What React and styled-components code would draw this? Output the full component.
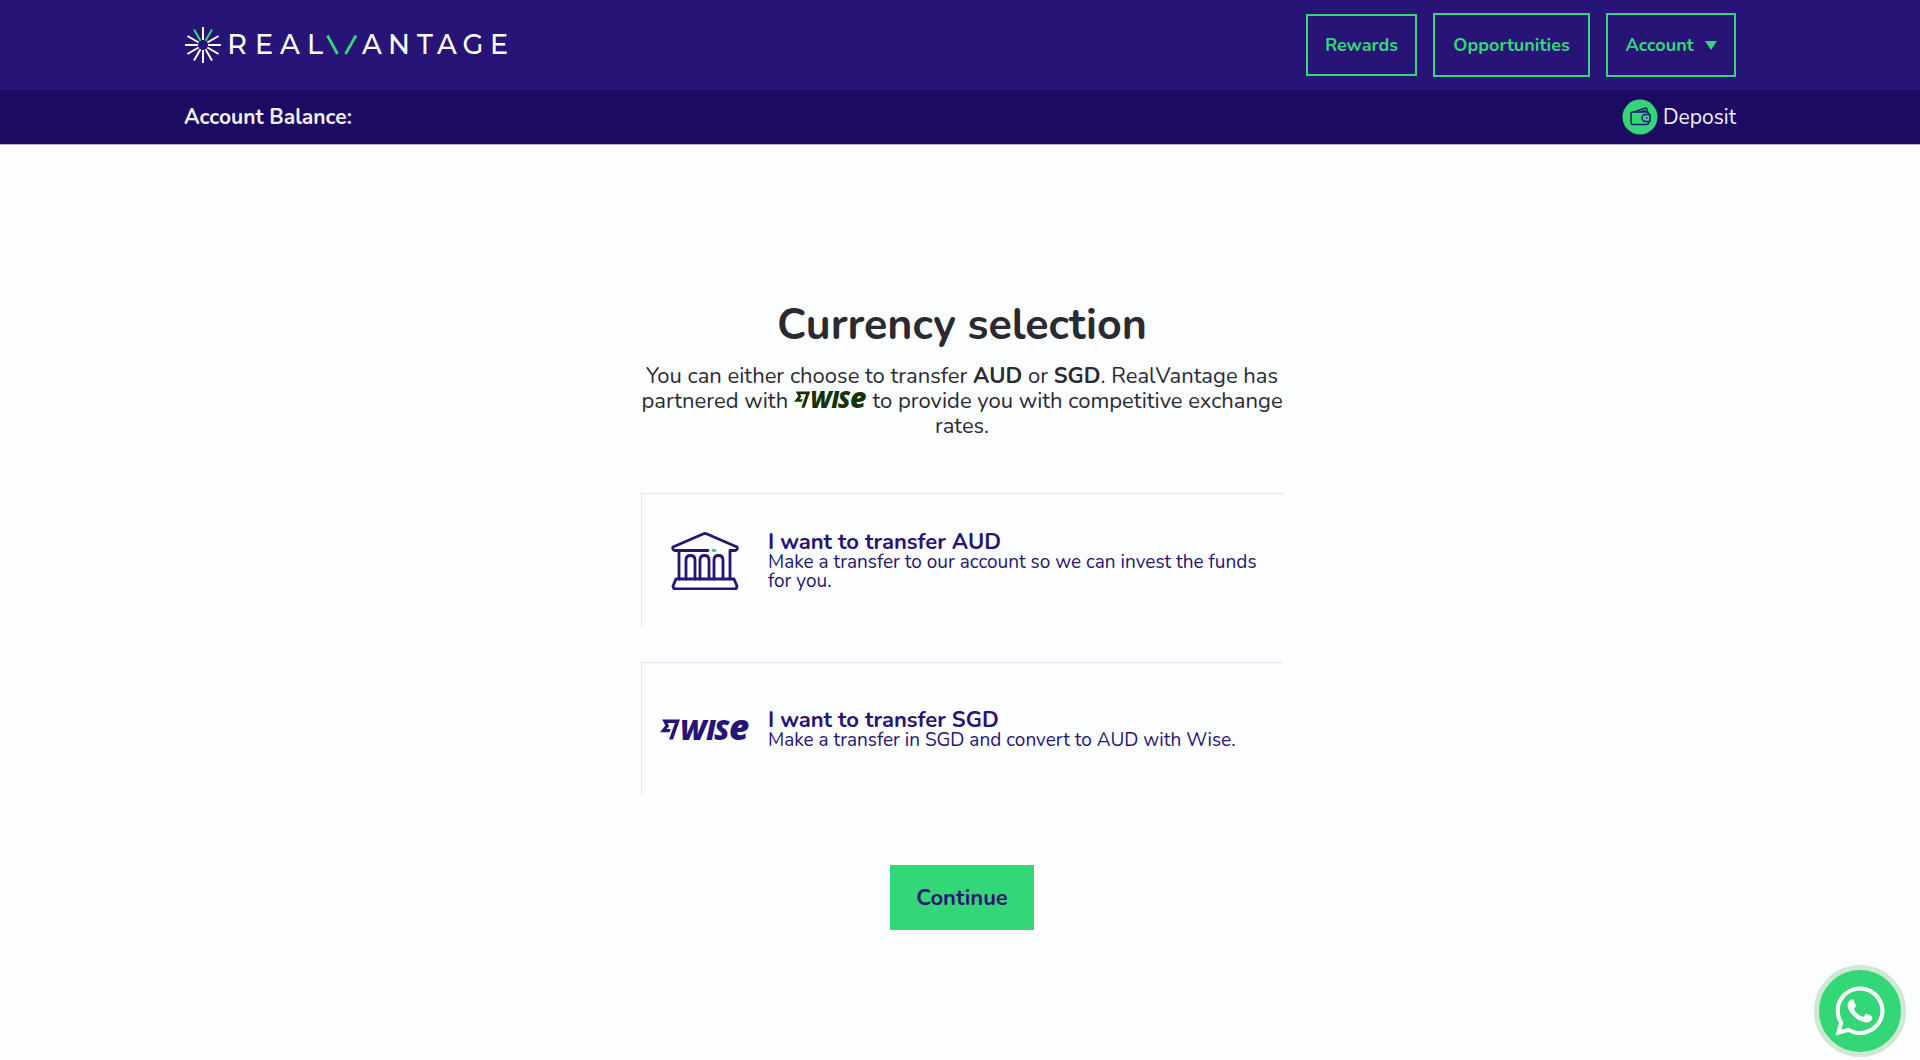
import React from 'react'
import styled, { createGlobalStyle } from 'styled-components'
import { FaWhatsapp } from 'react-icons/fa'

const GlobalStyle = createGlobalStyle`
  * {
    box-sizing: border-box;
  }

  body {
    margin: 0;
    min-height: 100vh;
    background: #fcfdff;
    color: #2b2a30;
    font-family: Nunito, Lato, sans-serif;
  }
`

const Header = styled.header`
  border-bottom: 1px solid #b5b0d0;
`

const Bar = styled.div`
  padding: 0 24px;
  background: ${({ $dark }) => ($dark ? '#1d0a62' : '#281376')};
`

const Container = styled.div`
  display: flex;
  align-items: center;
  justify-content: space-between;
  max-width: 1552px;
  height: ${({ $height }) => $height}px;
  margin: 0 auto;
`

const LogoLink = styled.a`
  display: flex;
`

const Nav = styled.nav`
  display: flex;
  align-items: center;
  gap: 16px;
`

const NavButton = styled.button`
  display: flex;
  align-items: center;
  justify-content: center;
  gap: 11px;
  width: ${({ $width }) => $width}px;
  height: ${({ $height = 64 }) => $height}px;
  padding: 0;
  border: 2px solid #33d778;
  background: none;
  color: #33d778;
  font: 700 18px Nunito, Lato, sans-serif;
  cursor: pointer;
`

const Caret = styled.span`
  border: 6px solid transparent;
  border-top: 9px solid #33d778;
  border-bottom: 0;
`

const Balance = styled.div`
  color: #f0f2ff;
  font-size: 21px;
  font-weight: 700;
`

const DepositLink = styled.a`
  display: flex;
  align-items: center;
  gap: 5px;
  color: #f0f2ff;
  font-size: 21px;
  text-decoration: none;
`

const Main = styled.main`
  display: flex;
  flex-direction: column;
  align-items: center;
  padding: 152px 24px 48px 28px;
`

const Title = styled.h1`
  margin: 0;
  font-size: 43px;
  font-weight: 700;
  line-height: 56px;
`

const Intro = styled.p`
  max-width: 644px;
  margin: 11px 0 54px;
  font-size: 22px;
  line-height: 25px;
  text-align: center;
`

const Options = styled.div`
  display: flex;
  flex-direction: column;
  gap: 35px;
  width: 100%;
  max-width: 642px;
`

const Option = styled.button`
  display: flex;
  align-items: center;
  gap: 18px;
  height: 134px;
  padding: 0 16px 0 18px;
  border: 0 solid #e3e5f5;
  border-width: 1px 0 0 1px;
  background: none;
  color: #281376;
  font-family: inherit;
  text-align: left;
  cursor: pointer;
`

const OptionIcon = styled.span`
  display: flex;
  flex: none;
  justify-content: center;
  width: 90px;
`

const OptionTitle = styled.strong`
  display: block;
  font-size: 22px;
  line-height: 22px;
`

const OptionText = styled.span`
  display: block;
  font-size: 19px;
  line-height: 19px;
`

const Continue = styled.button`
  width: 144px;
  height: 65px;
  margin-top: 69px;
  border: 0;
  background: #33d778;
  color: #281376;
  font: 700 22px Nunito, Lato, sans-serif;
  cursor: pointer;
`

const Chat = styled.a`
  position: fixed;
  right: 14px;
  bottom: 3px;
  display: flex;
  align-items: center;
  justify-content: center;
  width: 92px;
  height: 92px;
  border: 5px solid #cfe8d2;
  border-radius: 50%;
  background: #33d778;
  color: #fff;
`

const WiseSvg = styled.svg`
  overflow: visible;
  font-family: 'Open Sans', sans-serif;
  font-style: italic;
  font-weight: 800;
`

const rays = Array.from({ length: 12 }, (_, i) => i * 30)

const Logo = () => (
  <svg width="324" height="38" viewBox="0 0 324 38" fill="none">
    <g strokeWidth="2">
      {rays.map(angle => (
        <path
          key={angle}
          d="M19 1v13"
          stroke={angle === 30 || angle === 330 ? '#33d778' : '#fff'}
          transform={`rotate(${angle} 19 19)`}
        />
      ))}
    </g>
    <g
      fill="#fff"
      fontFamily="Montserrat, Inter, sans-serif"
      fontSize="27"
      fontWeight="500"
      textAnchor="middle"
    >
      <text x="53 80 106 131" y="28">
        REAL
      </text>
      <text x="188 215 241 263 289 315" y="28">
        ANTAGE
      </text>
    </g>
    <path
      d="M143.500 9.500l10 18.500M172 9.500l-10.500 18.500"
      stroke="#33d778"
      strokeWidth="2.800"
    />
  </svg>
)

const WiseLogo = ({ width, color }) => (
  <WiseSvg
    width={width}
    viewBox="0 0 90 21"
    fill={color}
    role="img"
    aria-label="Wise"
  >
    <path
      transform="scale(.83 .88)"
      d="M6.488 7.469 0 15.05h11.585l1.301-3.576H7.922l3.033-3.507.01-.092L8.993 4.48h8.873l-6.878 18.925h4.706L24 .595H2.543l3.945 6.874Z"
    />
    <text x="20 46 54" y="20.500" fontSize="28">
      WIS
    </text>
    <text x="69" y="20.500" fontSize="35">
      e
    </text>
  </WiseSvg>
)

const BankIcon = () => (
  <svg
    width="68"
    height="58"
    viewBox="0 0 68 58"
    fill="none"
    stroke="#281376"
    strokeWidth="2.800"
    strokeLinecap="round"
    strokeLinejoin="round"
  >
    <path d="M37 18.500H4Q1 18 2 15L32 2q2-1 4 0l30 13q1 3-2 3.500h-5V47M8 18.500V47" />
    <path d="M15 47V28q0-4.500 4.500-4.500T24 28v19M29 47V28q0-4.500 4.500-4.500T38 28v19M43 47V28q0-4.500 4.500-4.500T52 28v19" />
    <path d="M5 47h58l3 7q0 3-3 3H5q-3 0-3-3z" />
    <path d="M42 18.500h2" stroke="#33d778" />
  </svg>
)

const WalletIcon = () => (
  <svg width="36" height="36" viewBox="0 0 36 36" fill="none">
    <circle cx="18" cy="18" r="17.500" fill="#33d778" />
    <g stroke="#281376" strokeWidth="1.500" strokeLinejoin="round">
      <path d="M26.500 15.500v-1q0-1.500-1.500-1.500H11q-2 0-2 2v8.500q0 2 2 2h14q1.500 0 1.500-1.500v-1.500" />
      <path d="M12 13l11.500-4q1.500 0 1.500 2v2M19 13l4.500-1.500" />
      <path d="M28 15.500h-4.500a3.500 3.500 0 0 0 0 7H28zM24 19h1.500" />
    </g>
  </svg>
)

const App = () => (
  <>
    <GlobalStyle />
    <Header>
      <Bar>
        <Container $height={90}>
          <LogoLink href="#" aria-label="RealVantage">
            <Logo />
          </LogoLink>
          <Nav>
            <NavButton $width={111} $height={62}>
              Rewards
            </NavButton>
            <NavButton $width={157}>Opportunities</NavButton>
            <NavButton $width={130}>
              Account <Caret />
            </NavButton>
          </Nav>
        </Container>
      </Bar>
      <Bar $dark>
        <Container $height={54}>
          <Balance>Account Balance:</Balance>
          <DepositLink href="#">
            <WalletIcon />
            Deposit
          </DepositLink>
        </Container>
      </Bar>
    </Header>
    <Main>
      <Title>Currency selection</Title>
      <Intro>
        You can either choose to transfer <b>AUD</b> or <b>SGD</b>. RealVantage
        has partnered with <WiseLogo width={73} color="#163300" /> to provide
        you with competitive exchange rates.
      </Intro>
      <Options>
        <Option>
          <OptionIcon>
            <BankIcon />
          </OptionIcon>
          <span>
            <OptionTitle>I want to transfer AUD</OptionTitle>
            <OptionText>
              Make a transfer to our account so we can invest the funds for you.
            </OptionText>
          </span>
        </Option>
        <Option>
          <OptionIcon>
            <WiseLogo width={90} color="#281376" />
          </OptionIcon>
          <span>
            <OptionTitle>I want to transfer SGD</OptionTitle>
            <OptionText>
              Make a transfer in SGD and convert to AUD with Wise.
            </OptionText>
          </span>
        </Option>
      </Options>
      <Continue>Continue</Continue>
    </Main>
    <Chat href="#" aria-label="Chat on WhatsApp">
      <FaWhatsapp size={56} />
    </Chat>
  </>
)

export default App
